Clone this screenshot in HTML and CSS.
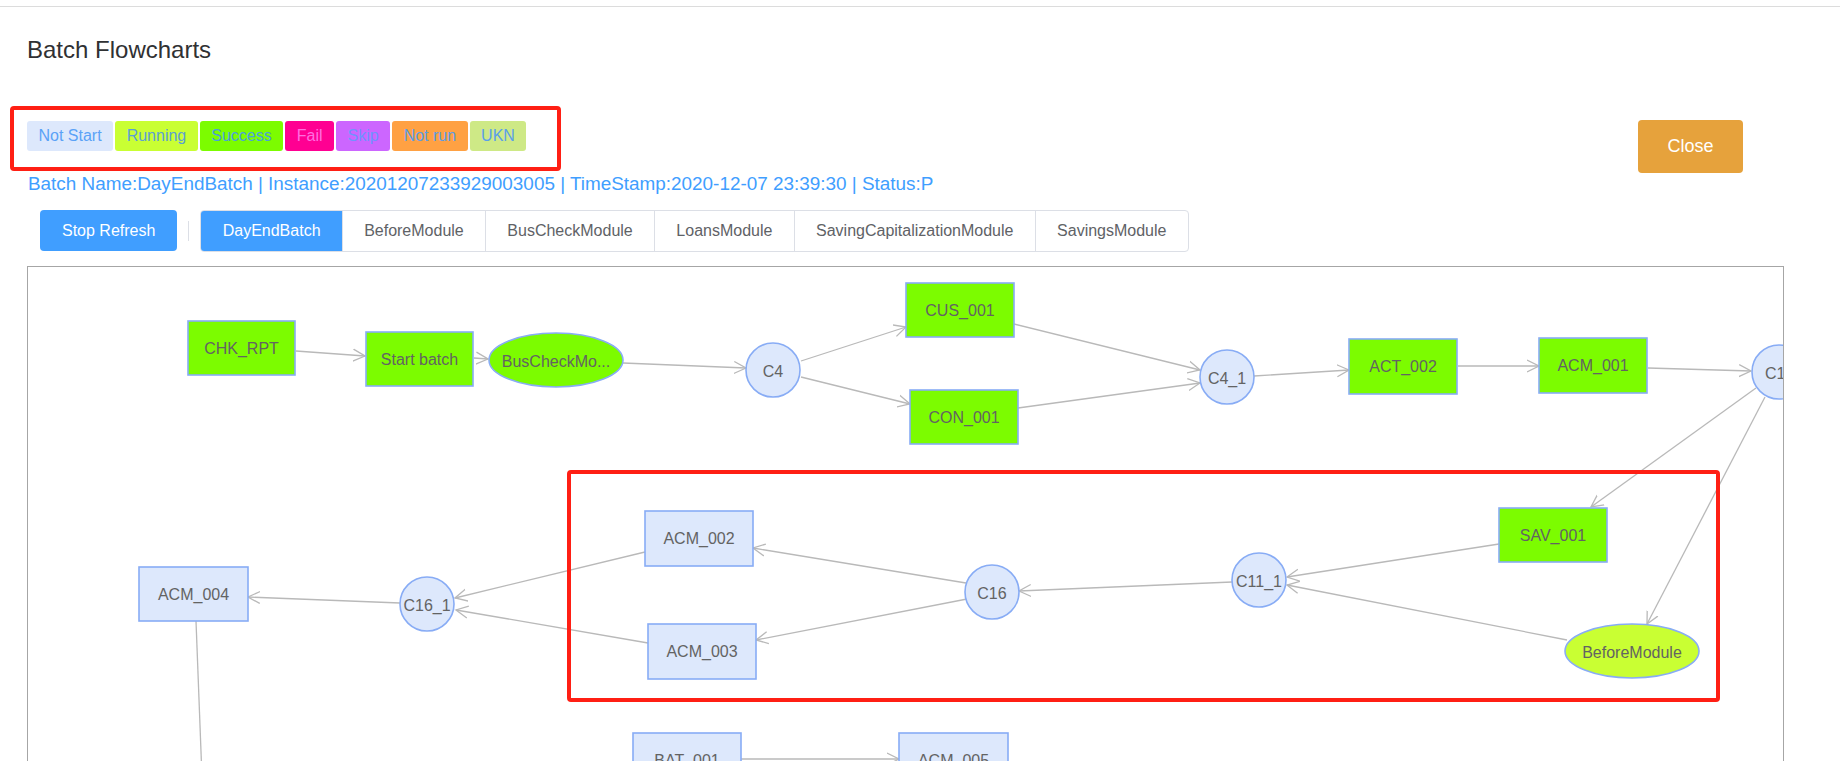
FILE: index.html
```html
<!DOCTYPE html>
<html>
<head>
<meta charset="utf-8">
<title>Batch Flowcharts</title>
<link rel="stylesheet" href="styles.css">
</head>
<body>
<div class="page">
  <div class="dialog">
    <div class="header"><h2 class="title">Batch Flowcharts</h2></div>
    <div class="content">
      <div class="top-row">
        <div class="status-block">
          <div class="legend">
            <span class="tag tag-notstart">Not Start</span>
            <span class="tag tag-running">Running</span>
            <span class="tag tag-success">Success</span>
            <span class="tag tag-fail">Fail</span>
            <span class="tag tag-skip">Skip</span>
            <span class="tag tag-notrun">Not run</span>
            <span class="tag tag-ukn">UKN</span>
          </div>
          <div class="info">Batch Name:DayEndBatch | Instance:20201207233929003005 | TimeStamp:2020-12-07 23:39:30 | Status:P</div>
        </div>
        <button class="btn-close">Close</button>
      </div>
      <div class="toolbar">
        <button class="btn-refresh">Stop Refresh</button>
        <span class="divider"></span>
        <div class="tabs">
          <span class="tab active">DayEndBatch</span>
          <span class="tab">BeforeModule</span>
          <span class="tab">BusCheckModule</span>
          <span class="tab">LoansModule</span>
          <span class="tab">SavingCapitalizationModule</span>
          <span class="tab">SavingsModule</span>
        </div>
      </div>
      <div class="chart">
        <svg class="graph" width="1755" height="560" viewBox="28 267 1755 560" xmlns="http://www.w3.org/2000/svg">
          <defs>
            <marker id="vee" markerUnits="userSpaceOnUse" markerWidth="14" markerHeight="14" refX="12" refY="7" orient="auto">
              <path d="M0,1 L12,7 L0,13" fill="none" stroke="#b9b9b9" stroke-width="1.3"/>
            </marker>
          </defs>
          <g class="edges">
            <line x1="296" y1="351" x2="365" y2="356"/>
            <line x1="474" y1="358" x2="488" y2="359"/>
            <line x1="623" y1="363" x2="746" y2="368"/>
            <line x1="801" y1="361" x2="906" y2="327"/>
            <line x1="801" y1="377" x2="910" y2="404"/>
            <line x1="1014" y1="324" x2="1200" y2="370"/>
            <line x1="1018" y1="408" x2="1200" y2="383"/>
            <line x1="1254" y1="376" x2="1349" y2="370"/>
            <line x1="1458" y1="366" x2="1539" y2="366"/>
            <line x1="1648" y1="368" x2="1751" y2="371"/>
            <line x1="1756" y1="388" x2="1591" y2="507"/>
            <line x1="1765" y1="397" x2="1647" y2="624"/>
            <line x1="1499" y1="544" x2="1287" y2="577"/>
            <line x1="1567" y1="640" x2="1287" y2="585"/>
            <line x1="1232" y1="582" x2="1019" y2="591"/>
            <line x1="966" y1="583" x2="753" y2="548"/>
            <line x1="967" y1="599" x2="756" y2="640"/>
            <line x1="645" y1="552" x2="455" y2="598"/>
            <line x1="648" y1="643" x2="456" y2="610"/>
            <line x1="400" y1="603" x2="248" y2="597"/>
            <line class="plain" x1="196" y1="621" x2="204" y2="830"/>
            <line x1="741" y1="759" x2="899" y2="759"/>
          </g>
          <g class="nodes">
            <rect class="ok" x="188" y="321" width="107" height="54"/>
            <text x="241.5" y="348">CHK_RPT</text>
            <rect class="ok" x="366" y="332" width="107" height="54"/>
            <text x="419.5" y="359">Start batch</text>
            <ellipse class="ok" cx="556" cy="360" rx="67" ry="27"/>
            <text x="556" y="361">BusCheckMo...</text>
            <circle class="idle" cx="773" cy="370" r="27"/>
            <text x="773" y="371">C4</text>
            <rect class="ok" x="906" y="283" width="108" height="54"/>
            <text x="960" y="310">CUS_001</text>
            <rect class="ok" x="910" y="390" width="108" height="54"/>
            <text x="964" y="417">CON_001</text>
            <circle class="idle" cx="1227" cy="377" r="27"/>
            <text x="1227" y="378">C4_1</text>
            <rect class="ok" x="1349" y="339" width="108" height="55"/>
            <text x="1403" y="366">ACT_002</text>
            <rect class="ok" x="1539" y="338" width="108" height="55"/>
            <text x="1593" y="365">ACM_001</text>
            <circle class="idle" cx="1779" cy="372" r="27"/>
            <text x="1779" y="373">C11</text>
            <rect class="ok" x="1499" y="508" width="108" height="54"/>
            <text x="1553" y="535">SAV_001</text>
            <ellipse class="run" cx="1632" cy="651" rx="67" ry="27"/>
            <text x="1632" y="652">BeforeModule</text>
            <circle class="idle" cx="1259" cy="580" r="27"/>
            <text x="1259" y="581">C11_1</text>
            <circle class="idle" cx="992" cy="592" r="27"/>
            <text x="992" y="593">C16</text>
            <rect class="idle" x="645" y="511" width="108" height="55"/>
            <text x="699" y="538">ACM_002</text>
            <rect class="idle" x="648" y="624" width="108" height="55"/>
            <text x="702" y="651">ACM_003</text>
            <circle class="idle" cx="427" cy="604" r="27"/>
            <text x="427" y="605">C16_1</text>
            <rect class="idle" x="139" y="567" width="109" height="54"/>
            <text x="193.5" y="594">ACM_004</text>
            <rect class="idle" x="633" y="733" width="108" height="55"/>
            <text x="687" y="760">BAT_001</text>
            <rect class="idle" x="899" y="733" width="109" height="55"/>
            <text x="953.5" y="760">ACM_005</text>
          </g>
        </svg>
      </div>
    </div>
  </div>
  <div class="annot annot-legend"></div>
  <div class="annot annot-area"></div>
</div>
</body>
</html>
```

FILE: styles.css
```css
html, body {
  margin: 0;
  padding: 0;
  height: 761px;
  overflow: hidden;
  background: #ffffff;
  font-family: "Liberation Sans", Arial, sans-serif;
}

.page {
  position: relative;
  padding-top: 6px;
}

.dialog {
  border-top: 1px solid #dcdcdc;
}

.header {
  padding: 31px 27px 0;
}

.title {
  margin: 0;
  font-size: 24px;
  line-height: 24px;
  font-weight: normal;
  color: #303133;
}

.content {
  padding: 0 56px 0 27px;
}

.top-row {
  display: flex;
  justify-content: space-between;
  align-items: flex-start;
  margin-top: 59px;
}

.legend {
  display: flex;
  gap: 2px;
}

.tag {
  height: 30px;
  line-height: 30px;
  padding: 0 11.5px;
  font-size: 16px;
  border-radius: 3px;
  color: #4f9ef5;
}

.tag-notstart { background: #dde8fc; color: #5aa2f7; }
.tag-running  { background: #c9ff33; color: #5c9fd4; }
.tag-success  { background: #7cfc00; color: #4b9fdb; }
.tag-fail     { background: #ff0092; color: #ff6ee0; }
.tag-skip     { background: #cc66ff; color: #6f93ff; }
.tag-notrun   { background: #ffa143; color: #5b9de3; }
.tag-ukn      { background: #cee986; color: #5aa0ea; }

.info {
  margin-top: 22px;
  margin-left: 1px;
  font-size: 18.9px;
  line-height: 22px;
  color: #409eff;
  white-space: nowrap;
}

.btn-close {
  margin-top: -1px;
  margin-right: 41px;
  width: 105px;
  height: 53px;
  background: #e6a23c;
  border: none;
  border-radius: 4px;
  color: #ffffff;
  font-size: 18px;
  font-family: "Liberation Sans", Arial, sans-serif;
  padding: 0;
}

.toolbar {
  display: flex;
  align-items: center;
  margin-top: 15px;
}

.btn-refresh {
  margin-left: 13px;
  height: 41px;
  padding: 0 22px;
  background: #409eff;
  color: #ffffff;
  border: none;
  border-radius: 4px;
  font-size: 16px;
  font-family: "Liberation Sans", Arial, sans-serif;
  align-self: flex-start;
}

.divider {
  width: 1px;
  height: 20px;
  background: #dcdfe6;
  margin: 0 11px;
}

.tabs {
  display: flex;
  border: 1px solid #dcdfe6;
  border-radius: 4px;
  overflow: hidden;
}

.tab {
  height: 40px;
  line-height: 40px;
  padding: 0 21.3px;
  font-size: 16px;
  color: #606266;
  border-left: 1px solid #dcdfe6;
  white-space: nowrap;
}

.tab:first-child {
  border-left: none;
}

.tab.active {
  background: #409eff;
  color: #ffffff;
}

.chart {
  margin-top: 14px;
  height: 560px;
  border: 1px solid #a6a6a6;
  overflow: hidden;
}

.graph {
  display: block;
}

.edges line {
  stroke: #b9b9b9;
  stroke-width: 1.3;
  marker-end: url(#vee);
}

.edges line.plain {
  marker-end: none;
}

.nodes rect,
.nodes circle,
.nodes ellipse {
  stroke: #88acf5;
  stroke-width: 1.6;
}

.nodes .ok   { fill: #7cfc00; }
.nodes .run  { fill: #c9ff33; }
.nodes .idle { fill: #dde8fc; }

.nodes text {
  font-family: "Liberation Sans", Arial, sans-serif;
  font-size: 16px;
  fill: #636363;
  text-anchor: middle;
  dominant-baseline: central;
}

.annot {
  position: absolute;
  box-sizing: border-box;
  border: 4px solid #ff1f14;
  border-radius: 4px;
}

.annot-legend {
  left: 10px;
  top: 106px;
  width: 551px;
  height: 65px;
}

.annot-area {
  left: 567px;
  top: 470px;
  width: 1153px;
  height: 232px;
}
```
